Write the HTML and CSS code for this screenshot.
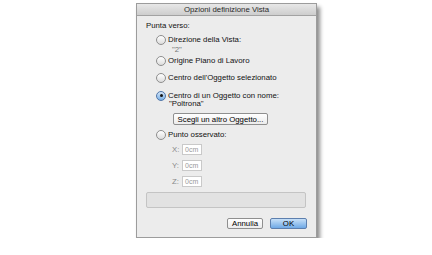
FILE: index.html
```html
<!DOCTYPE html>
<html>
<head>
<meta charset="utf-8">
<link rel="stylesheet" href="styles.css">
</head>
<body>
<div class="dialog">
  <div class="titlebar">Opzioni definizione Vista</div>
  <div class="content">
    <div class="line heading">Punta verso:</div>
    <div class="radio-row r1"><span class="radio"></span><span>Direzione della Vista:</span></div>
    <div class="sub s1">"2"</div>
    <div class="radio-row r2"><span class="radio"></span><span>Origine Piano di Lavoro</span></div>
    <div class="radio-row r3"><span class="radio"></span><span>Centro dell'Oggetto selezionato</span></div>
    <div class="radio-row r4"><span class="radio on"></span><span>Centro di un Oggetto con nome:</span></div>
    <div class="sub s2">"Poltrona"</div>
    <div class="choose-wrap"><span class="btn choose">Scegli un altro Oggetto...</span></div>
    <div class="radio-row r5"><span class="radio"></span><span>Punto osservato:</span></div>
    <div class="coord c1"><span class="clabel">X:</span><span class="field">0cm</span></div>
    <div class="coord"><span class="clabel">Y:</span><span class="field">0cm</span></div>
    <div class="coord"><span class="clabel">Z:</span><span class="field">0cm</span></div>
    <div class="graybox"></div>
    <div class="actions">
      <span class="btn cancel">Annulla</span>
      <span class="btn ok">OK</span>
    </div>
  </div>
</div>
</body>
</html>
```
FILE: styles.css
```css
html, body {
  margin: 0;
  padding: 0;
  background: #ffffff;
}
body {
  font-family: "Liberation Sans", Arial, sans-serif;
  font-size: 7.8px;
  color: #111;
  padding-top: 3px;
}
.dialog {
  margin-left: 136px;
  width: 181px;
  box-sizing: border-box;
  border: 1px solid #9c9c9c;
  background: #ececec;
  box-shadow: 3px 4px 4px rgba(0, 0, 0, 0.45);
}
.titlebar {
  height: 11px;
  line-height: 11px;
  text-align: center;
  color: #2a2a2a;
  background: linear-gradient(#e8e8e8, #cdcdcd);
  border-bottom: 1px solid #a2a2a2;
}
.content {
  display: flex;
  flex-direction: column;
  padding: 0 9px 8px 9px;
}
.line {
  height: 9px;
  line-height: 9px;
}
.heading {
  margin-top: 5px;
}
.radio-row {
  display: flex;
  align-items: center;
  height: 9px;
  line-height: 9px;
  padding-left: 10px;
  gap: 2px;
}
.r1 { margin-top: 5px; }
.r2 { margin-top: 2px; }
.r3 { margin-top: 8px; }
.r4 { margin-top: 9px; }
.r5 { margin-top: 5px; }
.radio {
  width: 8px;
  height: 8px;
  border-radius: 50%;
  border: 1px solid #8e8e8e;
  background: linear-gradient(#ffffff, #dcdcdc);
  box-sizing: content-box;
  flex: none;
  position: relative;
}
.radio.on {
  border-color: #4f75a8;
  background: linear-gradient(#d4e6f8, #78afe6);
}
.radio.on::after {
  content: "";
  position: absolute;
  left: 2.5px;
  top: 2.5px;
  width: 3px;
  height: 3px;
  border-radius: 50%;
  background: #151515;
}
.sub {
  height: 8px;
  line-height: 8px;
}
.s1 { margin-top: 2px; color: #777; padding-left: 26px; }
.s2 { margin-top: 0; padding-left: 23px; }
.choose-wrap {
  margin-top: 5px;
  padding-left: 27px;
  display: flex;
}
.btn {
  display: flex;
  align-items: center;
  justify-content: center;
  box-sizing: border-box;
  border: 1px solid #8f8f8f;
  border-radius: 2px;
  background: linear-gradient(#ffffff, #ececec);
  color: #000;
}
.choose {
  width: 95px;
  height: 12px;
}
.coord {
  display: flex;
  align-items: center;
  height: 11px;
  margin-top: 5px;
  padding-left: 26px;
}
.clabel {
  width: 10px;
  color: #888;
}
.field {
  width: 20px;
  height: 11px;
  box-sizing: border-box;
  border: 1px solid #c9c9c9;
  background: #ffffff;
  color: #999;
  font-size: 7px;
  line-height: 9px;
  padding-left: 2px;
}
.graybox {
  margin-top: 5px;
  height: 16px;
  box-sizing: border-box;
  margin-right: 1px;
  border: 1px solid #c4c4c4;
  border-radius: 2px;
  background: #e2e2e2;
}
.actions {
  display: flex;
  justify-content: flex-end;
  gap: 7px;
  margin-top: 10px;
}
.cancel {
  width: 36px;
  height: 11px;
}
.ok {
  width: 37px;
  height: 11px;
  border-color: #5d7fae;
  background: linear-gradient(#c7e0f8, #6fa9e6);
}
```
